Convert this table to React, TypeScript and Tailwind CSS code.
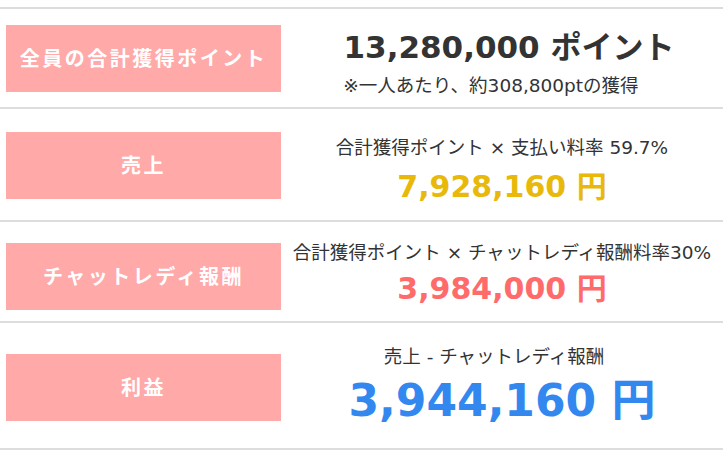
const FONT = "font-['DejaVu_Sans','Noto_Sans_CJK_JP',sans-serif]";

type Row = {
  label: string;
  rowClass: string;
  boxClass: string;
  body: React.ReactNode;
};

const rows: Row[] = [
  {
    label: "全員の合計獲得ポイント",
    rowClass: "h-[100px]",
    boxClass: "mt-[16px]",
    body: (
      <div className="pt-[23px]">
        <p className="pl-[14px] text-[31px] leading-[31px] font-bold text-[#333]">
          13,280,000 ポイント
        </p>
        <p className="mt-[12px] pr-[22px] text-[18.5px] leading-[22px] text-[#333]">
          ※一人あたり、約308,800ptの獲得
        </p>
      </div>
    ),
  },
  {
    label: "売上",
    rowClass: "h-[113px]",
    boxClass: "mt-[23px]",
    body: (
      <div className="pt-[28px]">
        <p className="text-[18.5px] leading-[22px] text-[#333]">
          合計獲得ポイント × 支払い料率 59.7%
        </p>
        <p className="mt-[11px] text-[30px] leading-[34px] font-bold text-[#e8b90a]">
          7,928,160 円
        </p>
      </div>
    ),
  },
  {
    label: "チャットレディ報酬",
    rowClass: "h-[101px]",
    boxClass: "mt-[21px]",
    body: (
      <div className="pt-[20px]">
        <p className="text-[18.5px] leading-[22px] text-[#333]">
          合計獲得ポイント × チャットレディ報酬料率30%
        </p>
        <p className="mt-[8px] text-[30px] leading-[34px] font-bold text-[#ff6b6b]">
          3,984,000 円
        </p>
      </div>
    ),
  },
  {
    label: "利益",
    rowClass: "h-[129px] border-b-2",
    boxClass: "mt-[31px]",
    body: (
      <div className="pt-[23px]">
        <p className="pr-[16px] text-[18.5px] leading-[22px] text-[#333]">
          売上 - チャットレディ報酬
        </p>
        <p className="mt-[9px] text-[44px] leading-[48px] font-bold text-[#3388f0]">
          3,944,160 円
        </p>
      </div>
    ),
  },
];

export default function App() {
  return (
    <div className={`${FONT} h-[456px] w-[723px] bg-white pt-[7px]`}>
      {rows.map((r) => (
        <div
          key={r.label}
          className={`flex items-start border-t-2 border-[#dddddd] ${r.rowClass}`}
        >
          <div
            className={`ml-[6px] flex h-[67px] w-[275px] shrink-0 items-center justify-center bg-[#ffa9a9] text-[20px] font-bold tracking-[2.5px] text-white ${r.boxClass}`}
          >
            {r.label}
          </div>
          <div className="flex-1 text-center">{r.body}</div>
        </div>
      ))}
    </div>
  );
}
